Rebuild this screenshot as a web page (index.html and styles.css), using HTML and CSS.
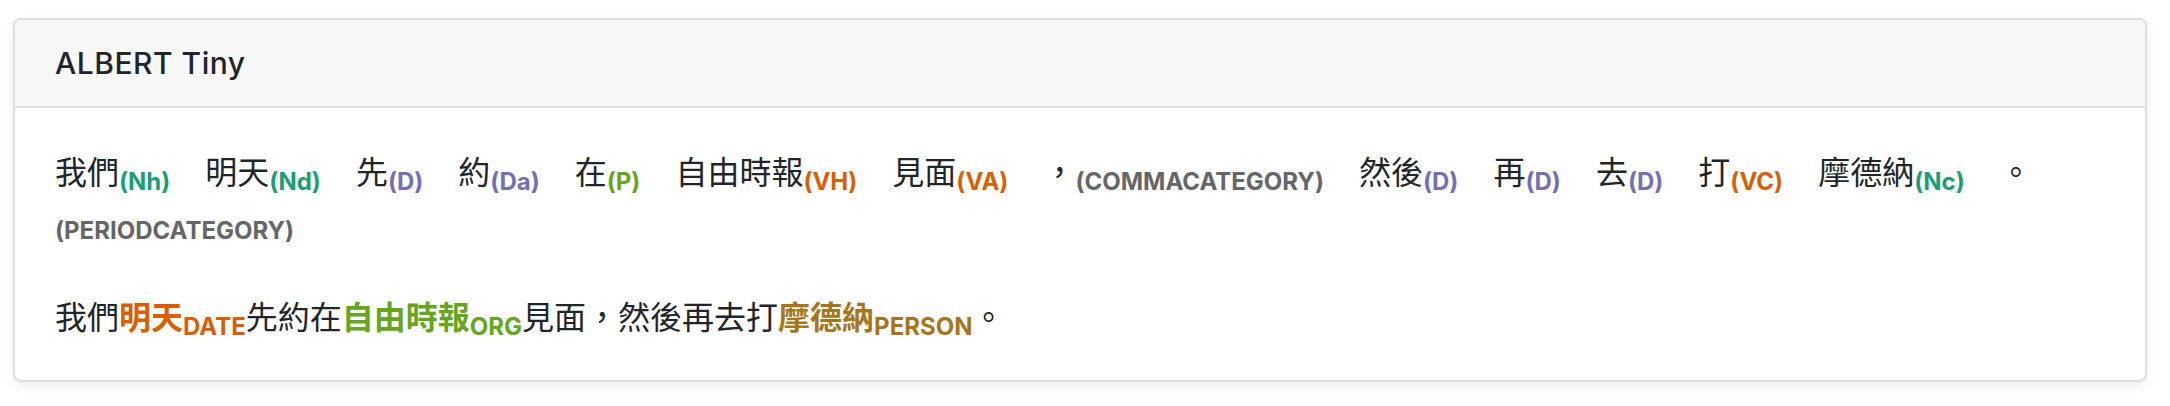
FILE: index.html
```html
<!DOCTYPE html>
<html lang="zh-Hant">
<head>
<meta charset="utf-8">
<title>ALBERT Tiny</title>
<link rel="stylesheet" href="styles.css">
</head>
<body>
<div class="card">
  <div class="card-header">
    <h5 class="card-title">ALBERT Tiny</h5>
  </div>
  <div class="card-body">
    <p class="pos-line"><span class="tok">我們<sub class="t-n">(Nh)</sub></span><span class="tok">明天<sub class="t-n">(Nd)</sub></span><span class="tok">先<sub class="t-d">(D)</sub></span><span class="tok">約<sub class="t-d">(Da)</sub></span><span class="tok">在<sub class="t-p">(P)</sub></span><span class="tok">自由時報<sub class="t-v">(VH)</sub></span><span class="tok">見面<sub class="t-v">(VA)</sub></span><span class="tok">，<sub class="t-c">(COMMACATEGORY)</sub></span><span class="tok">然後<sub class="t-d">(D)</sub></span><span class="tok">再<sub class="t-d">(D)</sub></span><span class="tok">去<sub class="t-d">(D)</sub></span><span class="tok">打<sub class="t-v">(VC)</sub></span><span class="tok">摩德納<sub class="t-n">(Nc)</sub></span><span class="tok">。<sub class="t-c">(PERIODCATEGORY)</sub></span></p>
    <p class="ner-line">我們<span class="ent e-date">明天<sub>DATE</sub></span>先約在<span class="ent e-org">自由時報<sub>ORG</sub></span>見面，然後再去打<span class="ent e-person">摩德納<sub>PERSON</sub></span>。</p>
  </div>
</div>
</body>
</html>
```
FILE: styles.css
```css
html, body {
  margin: 0;
  padding: 0;
  background: #ffffff;
}

body {
  padding: 18px 23px 20px 13px;
  font-family: "Inter", "Noto Sans CJK TC", sans-serif;
  font-size: 32px;
  line-height: 49px;
  color: #212529;
}

.card {
  border: 2px solid #dfdfdf;
  border-radius: 8px;
  background: #ffffff;
  box-shadow: 0 4px 12px rgba(0, 0, 0, 0.07);
  overflow: hidden;
}

.card-header {
  background: #f7f7f7;
  border-bottom: 2px solid #dfdfdf;
  padding: 24px 40px;
}

.card-title {
  margin: 0;
  font-size: 30px;
  font-weight: 500;
  letter-spacing: 0.5px;
  line-height: 38px;
  color: #212529;
}

.card-body {
  padding: 40px 40px 38px;
}

.pos-line,
.ner-line {
  margin: 0;
}

.pos-line {
  margin-bottom: 47px;
}

.tok {
  margin-right: 35px;
}

sub {
  position: relative;
  font-size: 75%;
  line-height: 0;
  vertical-align: baseline;
  bottom: -0.25em;
  font-weight: 700;
}

.t-n { color: #1b9e77; }
.t-d { color: #7570b3; }
.t-v { color: #d95f02; }
.t-p { color: #66a61e; }
.t-c { color: #666666; }

.ent {
  font-weight: 700;
}

.e-date { color: #d95f02; }
.e-org { color: #66a61e; }
.e-person { color: #a6761d; }
```
